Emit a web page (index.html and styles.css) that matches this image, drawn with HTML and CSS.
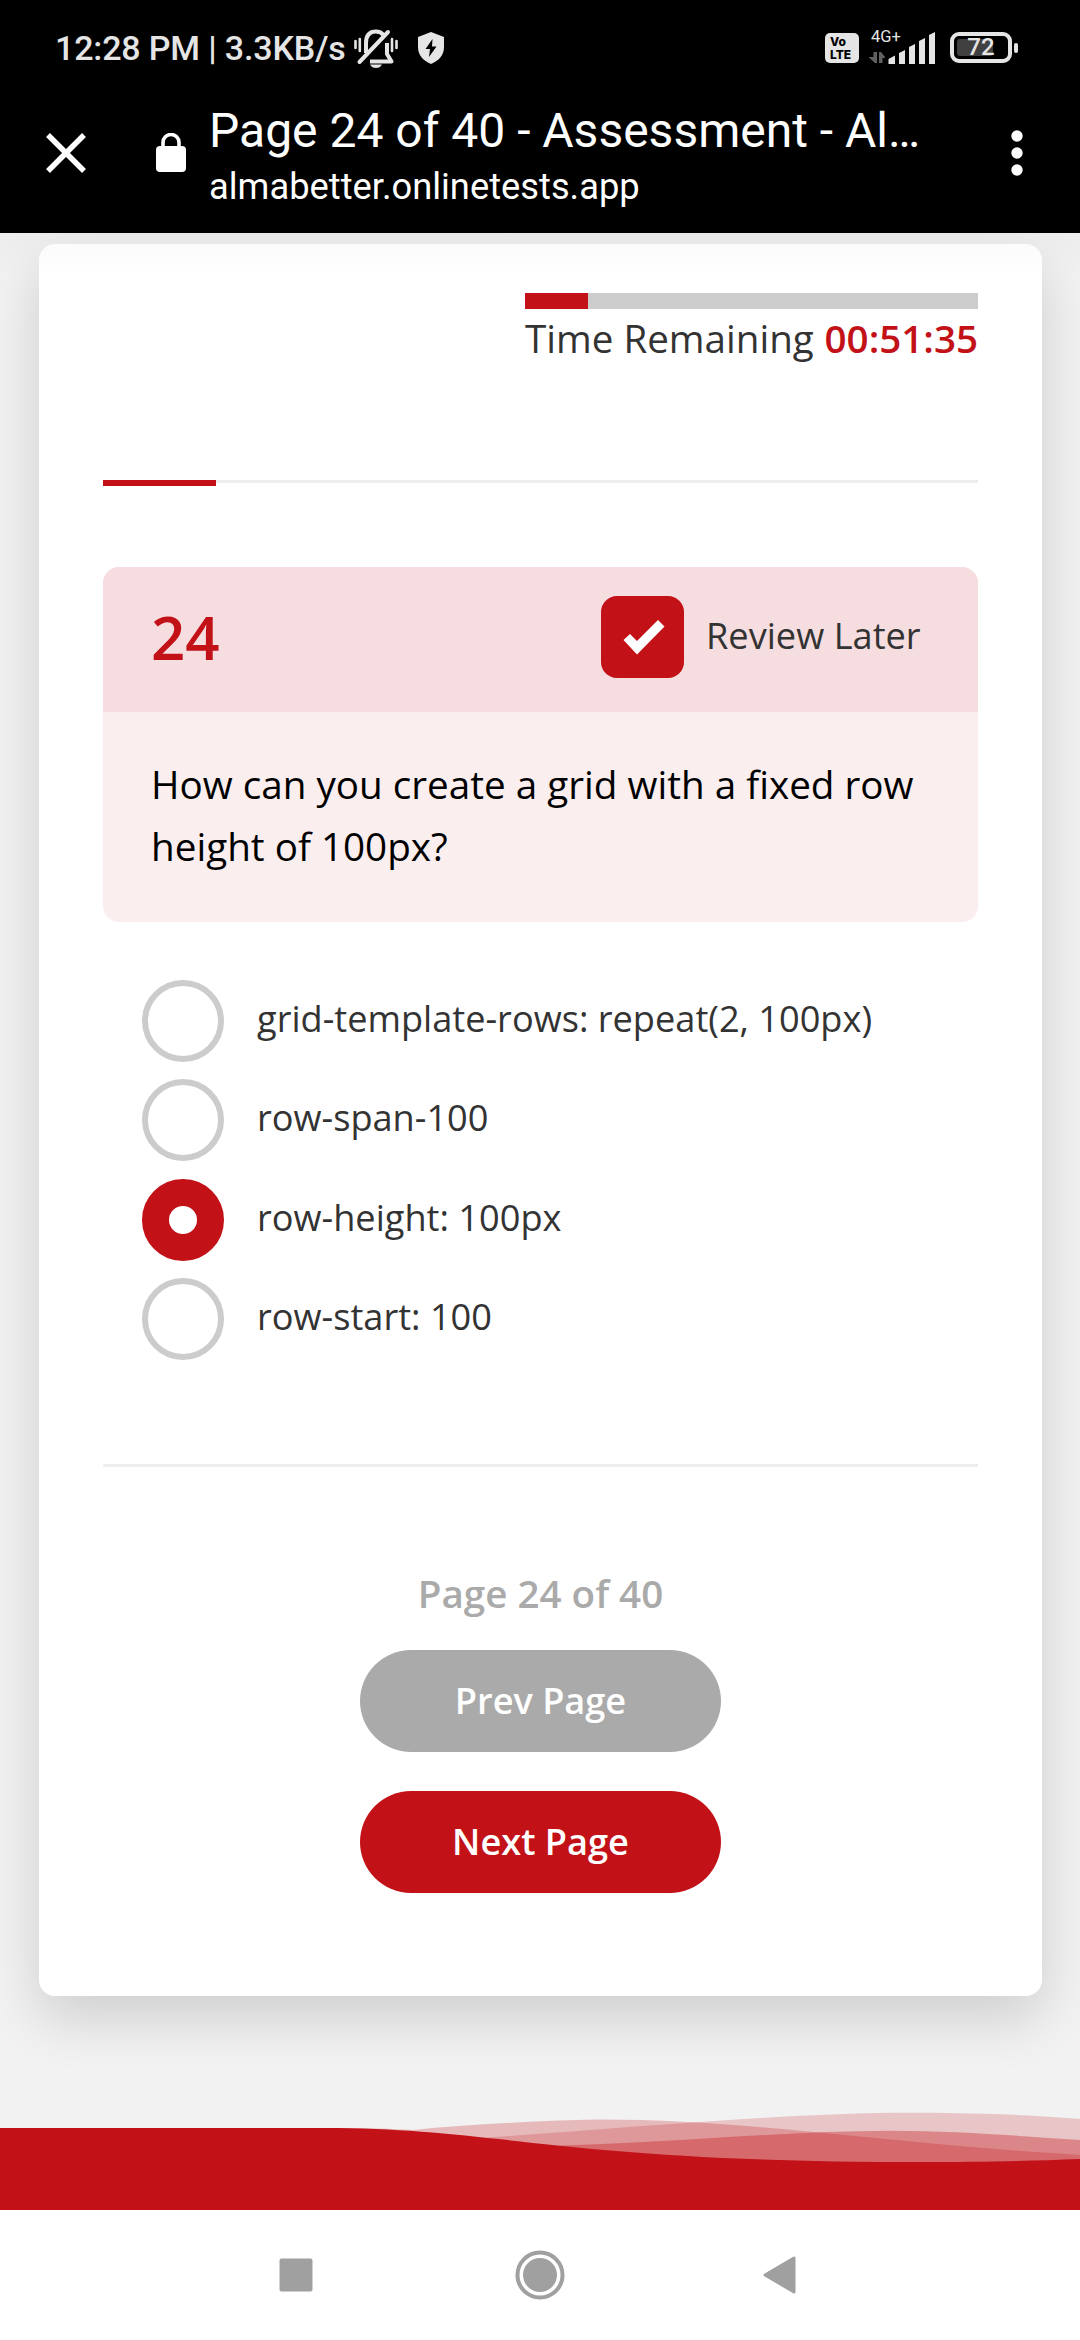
FILE: index.html
```html
<!DOCTYPE html>
<html lang="en">
<head>
<meta charset="utf-8">
<title>Page 24 of 40 - Assessment</title>
<link rel="stylesheet" href="styles.css">
</head>
<body>
<header class="top">
  <div class="status">
    <span class="clock">12:28 PM | 3.3KB/s</span>
    <svg class="bell" width="44" height="40" viewBox="0 0 44 40" fill="none" stroke="#e5e5e5" stroke-width="4"><path d="M12 25V15C12 7 16 3.500 22 3.500C25 3.500 28 5 29.500 7"/><path d="M16 33.500H37.500L33 26V15" stroke-linejoin="round"/><path d="M5.500 34L34 4" stroke-linecap="round"/><path d="M1.500 13V20M5.800 11V23M38 11V23M42.500 13V20" stroke-width="2.600" stroke-linecap="round"/><path d="M16 36.500H28Q26 40 22 40T16 36.500Z" fill="#e5e5e5" stroke="none"/></svg>
    <svg class="shield" width="28" height="32" viewBox="0 0 28 32"><path d="M14 0L27 5V15C27 24 21 29 14 32C7 29 1 24 1 15V5Z" fill="#e5e5e5"/><path d="M15.500 7L8.500 17H13L12 25L19.500 14.500H15Z" fill="#000"/></svg>
    <span class="volte"><span>Vo</span><span>LTE</span></span>
    <span class="network">
      <span class="gen">4G+</span>
      <svg width="68" height="32" viewBox="0 0 68 32"><path d="M4.500 20H8V31H6L0 25.500V25H4.500ZM10 31V20H12L16 25V26H13.500V31Z" fill="#606060"/><g fill="#e5e5e5"><path d="M19.500 27L26 23.500V32H19.500ZM30 21L36 18V32H30ZM40 15L46 12V32H40ZM50 9L56 6V32H50ZM60 3L66 0V32H60Z"/></g></svg>
    </span>
    <span class="battery"><span class="charge"></span><span class="level">72</span></span><span class="tip"></span>
  </div>
  <div class="toolbar">
    <svg class="close" width="40" height="40" viewBox="0 0 40 40"><path d="M2 2L38 38M38 2L2 38" stroke="#fff" stroke-width="5.500"/></svg>
    <svg class="lock" width="30" height="39" viewBox="0 0 30 39"><rect y="13" width="30" height="26" rx="4" fill="#fff"/><path d="M7 14V9.500a8 8 0 0 1 16 0V14" fill="none" stroke="#fff" stroke-width="3.600"/></svg>
    <div class="titles"><div class="title">Page 24 of 40 - Assessment - Al…</div><div class="url">almabetter.onlinetests.app</div></div>
    <svg class="more" width="12" height="46" viewBox="0 0 12 46" fill="#fff"><circle cx="6" cy="6" r="5.700"/><circle cx="6" cy="23" r="5.700"/><circle cx="6" cy="40" r="5.700"/></svg>
  </div>
</header>
<main class="page">
  <section class="card">
    <div class="timer">
      <div class="timebar"><div class="elapsed"></div></div>
      <div class="remaining"><span>Time Remaining</span> <b>00:51:35</b></div>
    </div>
    <div class="progress"><div class="done"></div></div>
    <div class="question">
      <div class="qhead">
        <span class="number">24</span>
        <span class="check"><svg width="42" height="35" viewBox="0 0 42 35"><path d="M0.500 20L7 14L14 21L35 0L41.500 6.500L14 34.500Z" fill="#fff"/></svg></span>
        <span class="review">Review Later</span>
      </div>
      <div class="qtext">How can you create a grid with a fixed row<br>height of 100px?</div>
    </div>
    <div class="options">
      <div class="option"><i class="radio"></i><span>grid-template-rows: repeat(2, 100px)</span></div>
      <div class="option"><i class="radio"></i><span>row-span-100</span></div>
      <div class="option"><i class="radio selected"></i><span>row-height: 100px</span></div>
      <div class="option"><i class="radio"></i><span>row-start: 100</span></div>
    </div>
    <div class="rule"></div>
    <div class="count">Page 24 of 40</div>
    <button class="btn prev">Prev Page</button>
    <button class="btn next">Next Page</button>
  </section>
  <svg class="waves" width="1080" height="110" viewBox="0 2100 1080 110" fill="#c21218">
    <path opacity=".25" d="M320 2128Q380 2127.800 413 2130Q490 2122 600 2119.600C750 2119.600 870 2142 1080 2155V2210H320Z"/>
    <path opacity=".2" d="M400 2142C560 2136 760 2112 920 2112.800C980 2113 1030 2115 1080 2119V2210H400Z"/>
    <path opacity=".35" d="M540 2146C660 2144 780 2131 890 2130.700C960 2131 1020 2136 1080 2140V2210H540Z"/>
    <path d="M0 2128H325C500 2128 560 2162 920 2162C980 2162 1030 2161 1080 2159V2210H0Z"/>
  </svg>
</main>
<nav class="nav">
  <svg width="34" height="34" viewBox="0 0 34 34"><rect x=".5" y=".5" width="33" height="33" rx="2" fill="#a0a0a0"/></svg>
  <svg width="50" height="50" viewBox="0 0 50 50"><circle cx="25" cy="25" r="22.500" fill="none" stroke="#a0a0a0" stroke-width="4"/><circle cx="25" cy="25" r="17" fill="#a0a0a0"/></svg>
  <svg width="34" height="38" viewBox="0 0 34 38"><path d="M2 19L31 2V36Z" fill="#a0a0a0" stroke="#a0a0a0" stroke-width="3" stroke-linejoin="round"/></svg>
</nav>
</body>
</html>
```
FILE: styles.css
```css
* { box-sizing: border-box; }
body { margin: 0; width: 1080px; height: 2340px; display: flex; flex-direction: column; overflow: hidden; background: #fff; font-family: "Open Sans", sans-serif; color: #333; }
svg { display: block; flex: none; }

.top { height: 233px; background: #000; color: #fff; font-family: Roboto, sans-serif; flex: none; }
.status { height: 95px; padding: 0 57px 0 55px; display: flex; align-items: center; color: #e5e5e5; }
.clock { width: 299px; font-size: 34px; letter-spacing: -.15px; font-weight: 500; white-space: nowrap; }
.shield { margin-left: 19px; }
.volte { width: 34px; height: 30px; margin-left: 380px; padding: 2px 0 0 5px; border-radius: 5px; background: #e5e5e5; color: #000; font: 800 12px/13px Inter, sans-serif; display: flex; flex-direction: column; }
.network { position: relative; margin-left: 10px; }
.gen { position: absolute; left: 2px; top: -5px; font-size: 16.500px; line-height: 19px; }
.battery { position: relative; width: 62px; height: 31px; margin-left: 13px; border: 4px solid #e5e5e5; border-radius: 9px; display: flex; justify-content: center; align-items: center; }
.charge { position: absolute; left: 3px; top: 3px; width: 36px; height: 17px; border-radius: 3px; background: #404040; }
.level { position: relative; font-size: 24px; font-weight: 500; line-height: 23px; }
.tip { width: 4px; height: 10px; margin-left: 2px; border-radius: 2px; background: #e5e5e5; }

.toolbar { height: 138px; padding-left: 46px; display: flex; }
.close { margin-top: 38px; }
.lock { margin: 38px 0 0 70px; }
.titles { width: 760px; margin-left: 23px; white-space: nowrap; }
.title { font-size: 48px; line-height: 56px; margin-top: 8px; }
.url { font-size: 36.300px; line-height: 42px; margin-top: 7px; }
.more { margin: 35px 0 0 42px; }

.page { position: relative; height: 1977px; flex: none; background: #f2f2f2; padding: 11px 38px 0 39px; overflow: hidden; display: flex; flex-direction: column; }
.page::before { content: ""; position: absolute; left: 0; top: 0; width: 100%; height: 45px; background: linear-gradient(rgba(0,0,0,.018), rgba(0,0,0,0)); z-index: 1; }
.card { height: 1752px; flex: none; padding: 49px 64px 0; border-radius: 16px; background: #fff; box-shadow: 0 22px 55px rgba(0,0,0,.15); display: flex; flex-direction: column; }
.timer { width: 453px; height: 187px; align-self: flex-end; }
.timebar { height: 16px; background: #ccc; }
.elapsed { width: 63px; height: 16px; background: #c21218; }
.remaining { font-size: 38.600px; line-height: 54px; margin-top: 2px; white-space: nowrap; display: flex; justify-content: space-between; }
.remaining b { font-weight: 600; color: #c21218; }
.progress { height: 3px; background: #eee; }
.done { width: 113px; height: 6px; background: #c21218; }
.question { height: 355px; margin-top: 84px; border-radius: 16px; background: #faeeee; overflow: hidden; }
.qhead { height: 145px; background: #f6dde0; padding-left: 48px; display: flex; }
.number { width: 450px; margin-top: 29px; font-size: 60px; line-height: 82px; font-weight: 600; color: #c21218; }
.check { width: 83px; height: 82px; margin-top: 29px; border-radius: 16px; background: #c21218; display: flex; padding: 24px 0 0 22px; }
.review { margin: 43px 0 0 22px; font-size: 36.200px; line-height: 50px; }
.qtext { margin: 41px 48px 0; font-size: 38.650px; line-height: 62px; color: #000; white-space: nowrap; }
.options { height: 398px; margin-top: 58px; padding-left: 39px; display: flex; flex-direction: column; gap: 17.400px; }
.option { height: 82px; display: flex; gap: 33px; font-size: 36.170px; line-height: 77.500px; }
.radio { width: 82px; height: 82px; border: 6px solid #ccc; border-radius: 50%; }
.selected { border: 27px solid #c21218; }
.rule { height: 3px; margin-top: 86px; background: #eee; flex: none; }
.count { margin-top: 99px; height: 54px; text-align: center; color: #aaa; font-weight: 600; font-size: 38.600px; line-height: 54px; }
.btn { width: 361px; height: 102px; margin: 0 auto; padding: 0 0 2px; border: 0; border-radius: 51px; color: #fff; font: 600 36.150px "Open Sans", sans-serif; }
.prev { margin-top: 30px; background: #aaa; }
.next { margin-top: 39px; background: #c21218; }
.waves { margin: 104px 0 0 -39px; }

.nav { height: 130px; padding: 40px 0 0 279px; display: flex; background: #fff; }
.nav svg:nth-child(1) { margin-top: 8px; }
.nav svg:nth-child(2) { margin-left: 202px; }
.nav svg:nth-child(3) { margin: 6px 0 0 198px; }
```
